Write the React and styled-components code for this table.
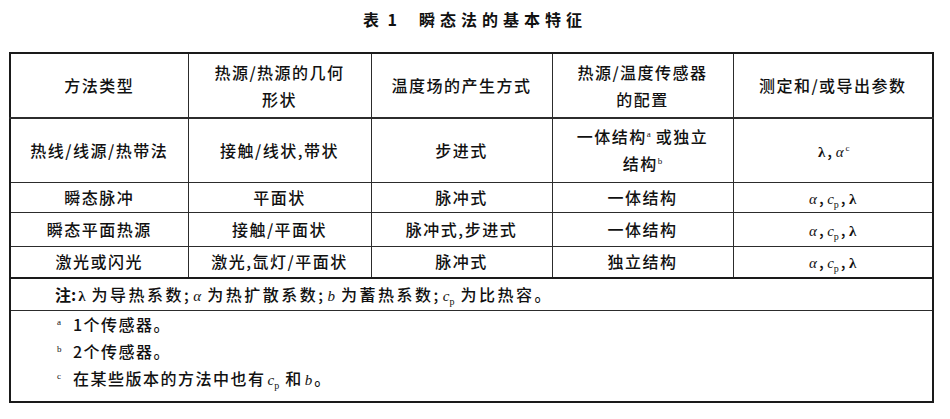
import React from 'react'
import styled, { createGlobalStyle } from 'styled-components'

const GlobalStyle = createGlobalStyle`
  html, body {
    margin: 0;
    padding: 0;
    background: #fff;
  }
  body {
    font-family: "Noto Sans CJK SC", "Noto Sans", sans-serif;
    color: #111;
  }
`

const Page = styled.div`
  width: 950px;
  height: 419px;
  padding-top: 9px;
  box-sizing: border-box;
`

const Title = styled.h1`
  margin: 0 0 23px;
  text-align: center;
  font-size: 16px;
  line-height: 20px;
  font-weight: 700;
  letter-spacing: 5px;
`

const TitleNo = styled.span`
  letter-spacing: 0;
  word-spacing: 5px;
  margin-right: 22px;
`

const Table = styled.table`
  margin-left: 9px;
  width: 925px;
  border-collapse: collapse;
  table-layout: fixed;
  border: 2px solid #1a1a1a;
`

const Col = styled.col`
  width: ${p => p.$w}px;
`

const Row = styled.tr`
  height: ${p => p.$h}px;
`

const Cell = styled.td`
  border: 1px solid #2c2c2c;
  border-bottom-width: ${p => (p.$thick ? 2 : 1)}px;
  text-align: center;
  vertical-align: middle;
  padding: 0 4px;
  font-size: 16px;
  font-weight: 500;
  line-height: 27px;
  letter-spacing: 1.5px;
`

const NoteCell = styled.td`
  border: 1px solid #2c2c2c;
  border-top: 2px solid #1a1a1a;
  padding: 0 0 0 44px;
  text-align: left;
  font-size: 16px;
  font-weight: 500;
  line-height: 27px;
  letter-spacing: 2.5px;
`

const FootCell = styled.td`
  border: 1px solid #2c2c2c;
  padding: 0 0 0 46px;
  vertical-align: top;
  text-align: left;
  font-size: 16px;
  font-weight: 500;
  letter-spacing: 1.5px;
`

const FootLine = styled.div`
  height: 27px;
  line-height: 27px;
  white-space: nowrap;
`

const Mark = styled.span`
  display: inline-block;
  width: 16px;
  font-family: "Liberation Serif", serif;
  font-size: 9px;
  line-height: 0;
  vertical-align: 6px;
  letter-spacing: 0;
`

const Sup = styled.sup`
  font-family: "Liberation Serif", serif;
  font-size: 9px;
  letter-spacing: 0;
  vertical-align: 6px;
  line-height: 0;
`

const Bold = styled.b`
  font-weight: 700;
  letter-spacing: 0;
`

const M = styled.i`
  font-family: "Liberation Serif", "DejaVu Serif", serif;
  font-style: ${p => (p.$up ? 'normal' : 'italic')};
  font-weight: ${p => (p.$up ? 700 : 400)};
  font-size: 15px;
  line-height: 0;
  letter-spacing: 0;
  margin: 0 ${p => p.$gap || 2}px 0 2px;
`

const Sub = styled.sub`
  font-family: "Liberation Serif", serif;
  font-size: 10px;
  line-height: 0;
  letter-spacing: 0;
  font-style: normal;
`

const Cp = ({ gap }) => (
  <M $gap={gap}>c<Sub>p</Sub></M>
)

const Params = () => (
  <>
    <M>α</M>,<Cp />,<M $up>λ</M>
  </>
)

const rows = [
  { h: 30, cells: ['瞬态脉冲', '平面状', '脉冲式', '一体结构'] },
  { h: 34, cells: ['瞬态平面热源', '接触/平面状', '脉冲式,步进式', '一体结构'] },
  { h: 32, cells: ['激光或闪光', '激光,氙灯/平面状', '脉冲式', '独立结构'] }
]

export default function App () {
  return (
    <Page>
      <GlobalStyle />
      <Title><TitleNo>表 1</TitleNo>瞬态法的基本特征</Title>
      <Table>
        <colgroup>
          <Col $w={178} />
          <Col $w={183} />
          <Col $w={181} />
          <Col $w={181} />
          <Col $w={200} />
        </colgroup>
        <tbody>
          <Row $h={65}>
            <Cell $thick>方法类型</Cell>
            <Cell $thick>热源/热源的几何<br />形状</Cell>
            <Cell $thick>温度场的产生方式</Cell>
            <Cell $thick>热源/温度传感器<br />的配置</Cell>
            <Cell $thick>测定和/或导出参数</Cell>
          </Row>
          <Row $h={64}>
            <Cell>热线/线源/热带法</Cell>
            <Cell>接触/线状,带状</Cell>
            <Cell>步进式</Cell>
            <Cell>一体结构<Sup>a</Sup> 或独立<br />结构<Sup>b</Sup></Cell>
            <Cell><M $up>λ</M>,<M>α</M><Sup>c</Sup></Cell>
          </Row>
          {rows.map((r, i) => (
            <Row key={i} $h={r.h}>
              {r.cells.map((c, j) => <Cell key={j}>{c}</Cell>)}
              <Cell><Params /></Cell>
            </Row>
          ))}
          <Row $h={32}>
            <NoteCell colSpan={5}>
              <Bold>注:</Bold><M $up $gap={6}>λ</M>为导热系数;<M $gap={6}>α</M>为热扩散系数;<M $gap={6}>b</M>为蓄热系数;<Cp gap={6} />为比热容。
            </NoteCell>
          </Row>
          <Row $h={92}>
            <FootCell colSpan={5}>
              <FootLine><Mark>a</Mark>1个传感器。</FootLine>
              <FootLine><Mark>b</Mark>2个传感器。</FootLine>
              <FootLine><Mark>c</Mark>在某些版本的方法中也有<Cp gap={6} />和<M>b</M>。</FootLine>
            </FootCell>
          </Row>
        </tbody>
      </Table>
    </Page>
  )
}
